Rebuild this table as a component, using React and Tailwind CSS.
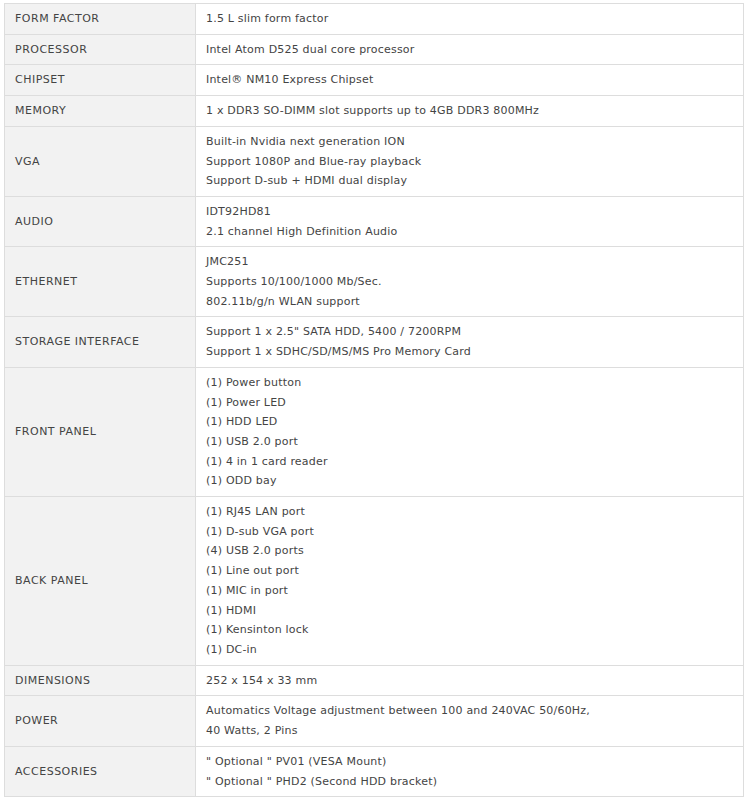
import React from 'react';

const specs = [
  ['FORM FACTOR', ['1.5 L slim form factor']],
  ['PROCESSOR', ['Intel Atom D525 dual core processor']],
  ['CHIPSET', ['Intel® NM10 Express Chipset']],
  ['MEMORY', ['1 x DDR3 SO-DIMM slot supports up to 4GB DDR3 800MHz']],
  ['VGA', ['Built-in Nvidia next generation ION', 'Support 1080P and Blue-ray playback', 'Support D-sub + HDMI dual display']],
  ['AUDIO', ['IDT92HD81', '2.1 channel High Definition Audio']],
  ['ETHERNET', ['JMC251', 'Supports 10/100/1000 Mb/Sec.', '802.11b/g/n WLAN support']],
  ['STORAGE INTERFACE', ['Support 1 x 2.5" SATA HDD, 5400 / 7200RPM', 'Support 1 x SDHC/SD/MS/MS Pro Memory Card']],
  ['FRONT PANEL', ['(1) Power button', '(1) Power LED', '(1) HDD LED', '(1) USB 2.0 port', '(1) 4 in 1 card reader', '(1) ODD bay']],
  ['BACK PANEL', ['(1) RJ45 LAN port', '(1) D-sub VGA port', '(4) USB 2.0 ports', '(1) Line out port', '(1) MIC in port', '(1) HDMI', '(1) Kensinton lock', '(1) DC-in']],
  ['DIMENSIONS', ['252 x 154 x 33 mm']],
  ['POWER', ['Automatics Voltage adjustment between 100 and 240VAC 50/60Hz,', '40 Watts, 2 Pins']],
  ['ACCESSORIES', ['" Optional " PV01 (VESA Mount)', '" Optional " PHD2 (Second HDD bracket)']],
];

export default function App() {
  return (
    <div className="bg-white pl-[4px] pt-[3px] text-[11px] leading-[19.7px] text-[#444]" style={{ fontFamily: '"DejaVu Sans", Verdana, sans-serif' }}>
      <table className="w-[740px] border-collapse border border-[#ddd]">
        <tbody>
          {specs.map(([label, lines]) => (
            <tr key={label}>
              <td className="w-[191px] border border-[#ddd] bg-[#f2f2f2] px-[10px] py-[5px] align-middle tracking-[0.5px]">{label}</td>
              <td className="border border-[#ddd] bg-white px-[10px] py-[5px] tracking-[0.2px]">
                {lines.map((l) => (
                  <div key={l}>{l}</div>
                ))}
              </td>
            </tr>
          ))}
        </tbody>
      </table>
    </div>
  );
}
